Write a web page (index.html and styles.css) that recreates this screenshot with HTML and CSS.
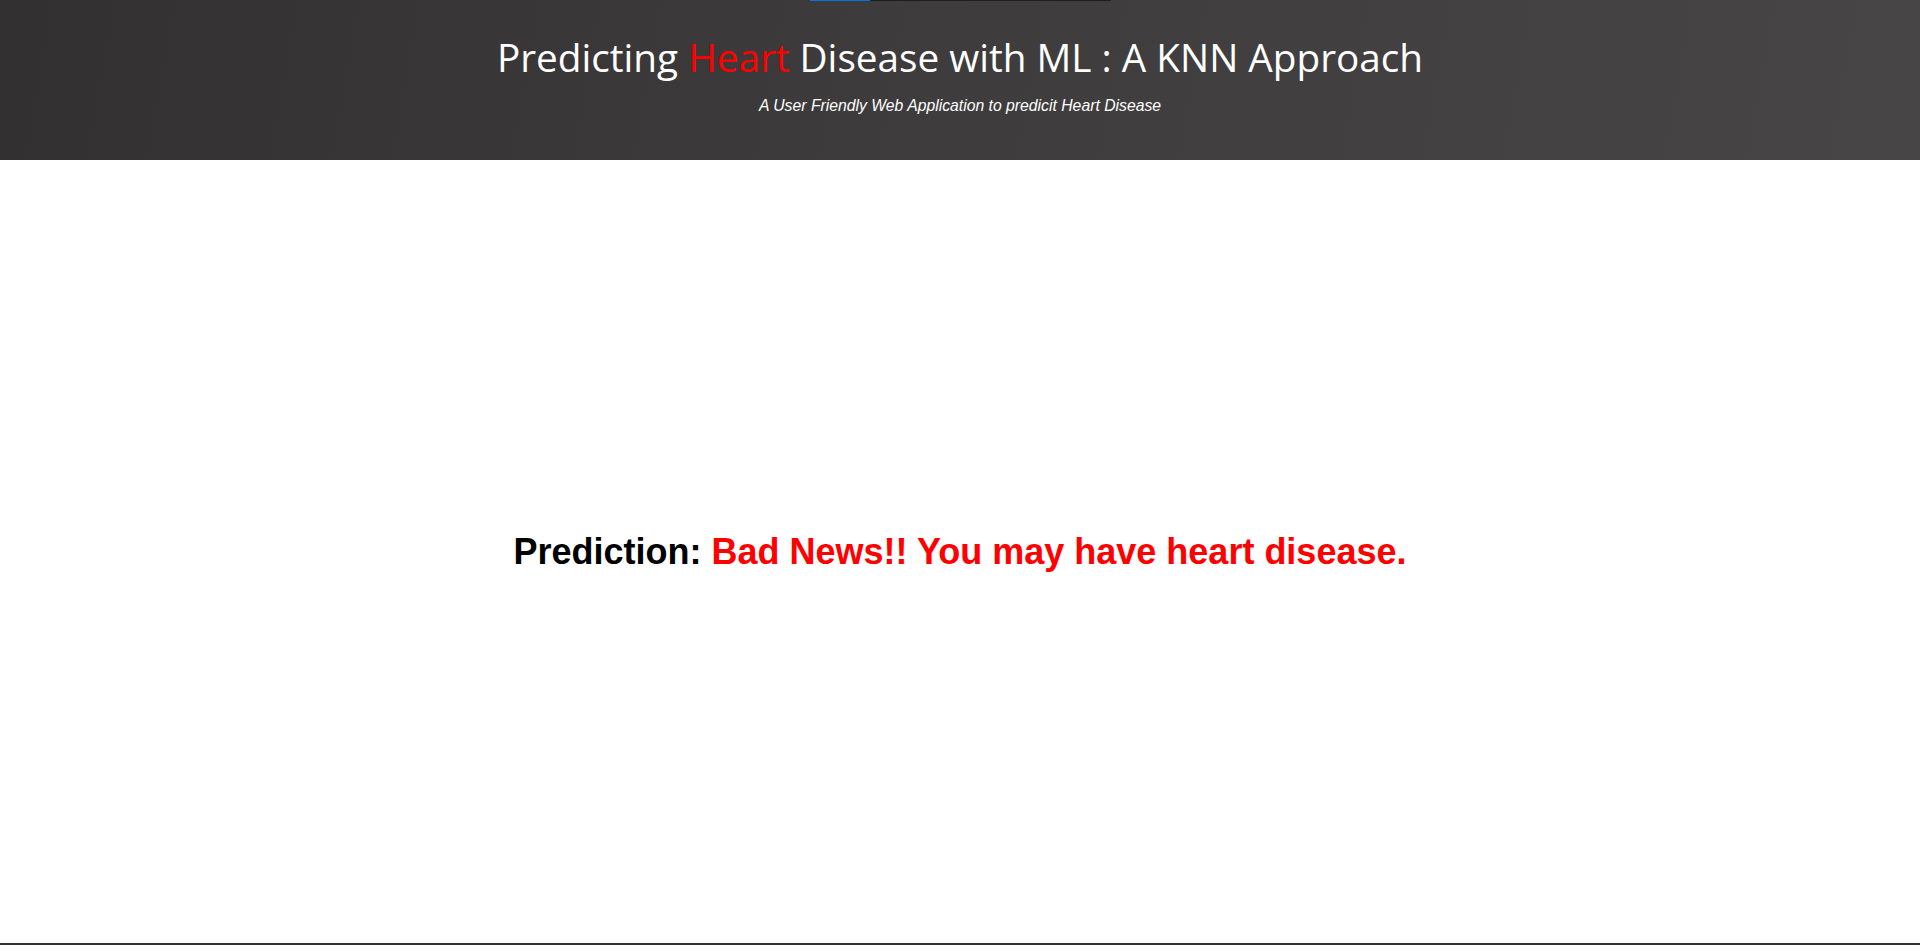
FILE: index.html
```html
<!DOCTYPE html>
<html lang="en">
<head>
<meta charset="utf-8">
<title>Heart Disease Prediction</title>
<link rel="stylesheet" href="styles.css">
</head>
<body>
<header class="hero">
  <div class="progress"><div class="progress-fill"></div></div>
  <h1 class="title">Predicting <span class="accent">Heart</span> Disease with ML : A KNN Approach</h1>
  <p class="subtitle">A User Friendly Web Application to predicit Heart Disease</p>
</header>
<main class="result">
  <h2 class="prediction">Prediction: <span class="bad">Bad News!! You may have heart disease.</span></h2>
</main>
<footer class="footer"></footer>
</body>
</html>
```
FILE: styles.css
```css
html, body {
  margin: 0;
  padding: 0;
  height: 100%;
}
body {
  display: flex;
  flex-direction: column;
  background: #ffffff;
  font-family: "Liberation Sans", Arial, sans-serif;
}
.hero {
  height: 160px;
  box-sizing: border-box;
  background: linear-gradient(100deg, #323031 0%, #3e3c3d 50%, #474546 100%);
  display: flex;
  flex-direction: column;
  align-items: center;
}
.progress {
  width: 301px;
  height: 1px;
  background: #1f1f1f;
}
.progress-fill {
  width: 60px;
  height: 100%;
  background: #0a70d8;
}
.title {
  margin: 0;
  margin-top: 33px;
  font-family: "Open Sans", sans-serif;
  font-weight: 400;
  font-size: 38.7px;
  line-height: 46px;
  color: #ffffff;
}
.accent {
  color: #ff0000;
}
.subtitle {
  margin: 0;
  margin-top: 17px;
  font-family: "Liberation Sans", Arial, sans-serif;
  font-style: italic;
  font-size: 15.75px;
  line-height: 18px;
  color: #ffffff;
}
.result {
  flex: 1;
  display: flex;
  align-items: center;
  justify-content: center;
}
.prediction {
  margin: 0;
  font-family: "Liberation Sans", Arial, sans-serif;
  font-weight: 700;
  font-size: 36px;
  color: #000000;
}
.bad {
  color: #ff0000;
}
.footer {
  height: 2px;
  background: #333333;
}
```
